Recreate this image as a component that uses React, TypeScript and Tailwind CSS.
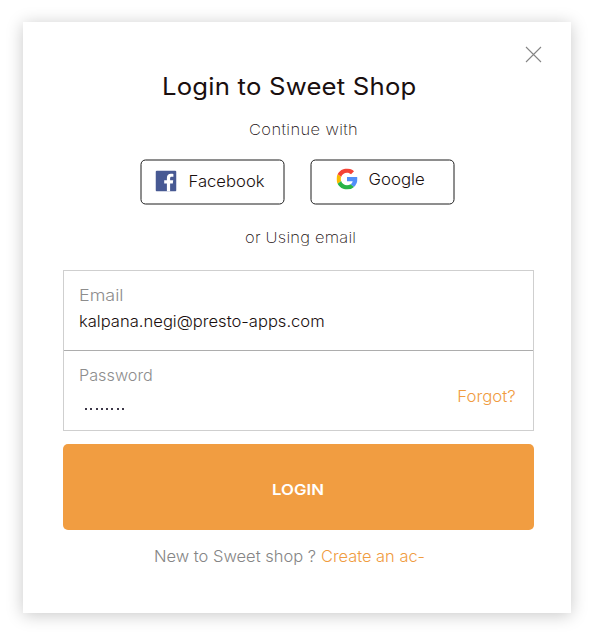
import React from "react";

function FacebookIcon() {
  return (
    <svg className="block h-[21px] w-[21px] shrink-0" viewBox="0 0 21 21" aria-hidden="true">
      <rect width="21" height="21" rx="1.5" fill="#475993" />
      <path
        d="M11.4 21v-8.1H8.7V9.7h2.7V7.4c0-2.7 1.7-4.1 4.1-4.1 1.1 0 2 .1 2.4.2v2.8h-1.7c-1.3 0-1.6.7-1.6 1.6v1.8h3.1l-.4 3.2h-2.7V21z"
        fill="#fff"
      />
    </svg>
  );
}

function GoogleIcon() {
  return (
    <svg className="block h-[21px] w-[21px] shrink-0" viewBox="0 0 48 48" aria-hidden="true">
      <path fill="#F44336" d="M24 9.5c3.54 0 6.71 1.22 9.21 3.6l6.85-6.85C35.9 2.38 30.47 0 24 0 14.62 0 6.51 5.38 2.56 13.22l7.98 6.19C12.43 13.72 17.74 9.5 24 9.5z" />
      <path fill="#518EF8" d="M47.6 19.6H24v9.3h12.94c-.58 2.96-2.26 5.48-4.78 7.18l7.73 6C44.4 37.9 48 31.9 48 24c0-1.5-.15-3-.4-4.4z" />
      <path fill="#FBBB00" d="M10.53 28.59c-.48-1.45-.76-2.99-.76-4.59s.27-3.14.76-4.59l-7.98-6.19C.92 16.46 0 20.12 0 24c0 3.88.92 7.54 2.56 10.78l7.97-6.19z" />
      <path fill="#28B446" d="M24 48c6.48 0 11.93-2.13 15.89-5.81l-7.73-6c-2.15 1.45-4.92 2.3-8.16 2.3-6.26 0-11.57-4.22-13.47-9.91l-7.98 6.19C6.51 42.62 14.62 48 24 48z" />
    </svg>
  );
}

export default function App() {
  return (
    <main className="h-[639px] w-[589px] overflow-hidden bg-white pt-[22px] pl-[23px] font-['Inter','Liberation_Sans',sans-serif] font-light">
      <section className="flow-root h-[591px] w-[548px] bg-white px-10 text-[#1a0f0f] shadow-[0_2px_16px_rgba(0,0,0,0.22)]">
        <div className="-mr-3 flex h-[49px] justify-end pt-[24px] pr-px">
          <button aria-label="Close" className="h-[17px] w-[17px]">
            <svg className="block h-[17px] w-[17px]" viewBox="0 0 17 17" fill="none" stroke="#858585" strokeWidth="1.1">
              <path d="M1 1l15 15M16 1L1 16" />
            </svg>
          </button>
        </div>

        <h1 className="ml-[99px] h-[47px] origin-left scale-x-[1.07] text-[24px] leading-8 font-normal tracking-[0.2px] whitespace-nowrap">Login to Sweet Shop</h1>
        <p className="ml-[186px] h-[42px] origin-left scale-x-[1.1] text-[15px] leading-6 font-extralight tracking-[0.35px] whitespace-nowrap">Continue with</p>

        <div className="ml-[78px] flex gap-[26px]">
          <button className="flex h-[45px] w-[144px] -translate-x-[0.5px] -translate-y-[0.5px] items-start rounded-[5px] border border-[#1c1c1c] pt-[10px] pl-[14px]">
            <FacebookIcon />
            <span className="-mt-[1.5px] ml-[11.5px] origin-left scale-x-[1.04] text-[16px] leading-[22px]">Facebook</span>
          </button>
          <button className="flex h-[45px] w-[144px] -translate-x-[0.5px] -translate-y-[0.5px] items-start rounded-[5px] border border-[#1c1c1c] pt-[8px] pl-[25px]">
            <GoogleIcon />
            <span className="-mt-[1.5px] ml-[10.5px] origin-left scale-x-[1.05] text-[16px] leading-[22px]">Google</span>
          </button>
        </div>

        <p className="mt-[21px] ml-[182px] h-[44px] origin-left scale-x-[1.1] text-[15px] leading-6 font-extralight tracking-[0.2px] whitespace-nowrap">or Using email</p>

        <form className="h-[161px] w-[471px] border border-[#cfcfcf]">
          <div className="h-[80px] border-b border-[#adadad] pt-[11px] pl-[15px] text-[16px] leading-[26px] whitespace-nowrap">
            <div className="origin-left scale-x-[1.12] text-[#8d8d8d]">Email</div>
            <div className="origin-left scale-x-[1.036]">kalpana.negi@presto-apps.com</div>
          </div>
          <div className="flex h-[79px] justify-between pt-[11px] pr-[17px] pl-[15px] text-[16px] leading-[26px]">
            <div>
              <div className="origin-left scale-x-[1.015] text-[#8d8d8d]">Password</div>
              <div className="mt-[20px] ml-[6px] flex gap-[3.3px]">
                {Array.from({ length: 8 }, (_, i) => (
                  <span key={i} className="h-[2px] w-[2px] bg-[#3d3848]" />
                ))}
              </div>
            </div>
            <a className="mt-[21px] h-[26px] origin-right scale-x-[1.05] text-[#f09c3f]">Forgot?</a>
          </div>
        </form>

        <button className="mt-[13px] flex h-[86px] w-[471px] items-start rounded-[5px] bg-[#f19d41] pt-[34px] pl-[209px] text-[15px] leading-[23px] font-semibold text-white">
          <span className="origin-left scale-x-[1.12]">LOGIN</span>
        </button>

        <p className="mt-[14px] ml-[91px] flex text-[16px] leading-[25px] whitespace-nowrap">
          <span className="w-[167px] origin-left scale-x-[1.03] text-[#858585]">New to Sweet shop ?</span>
          <a className="origin-left scale-x-[1.025] text-[#f09c3f]">Create an ac-</a>
        </p>
      </section>
    </main>
  );
}
